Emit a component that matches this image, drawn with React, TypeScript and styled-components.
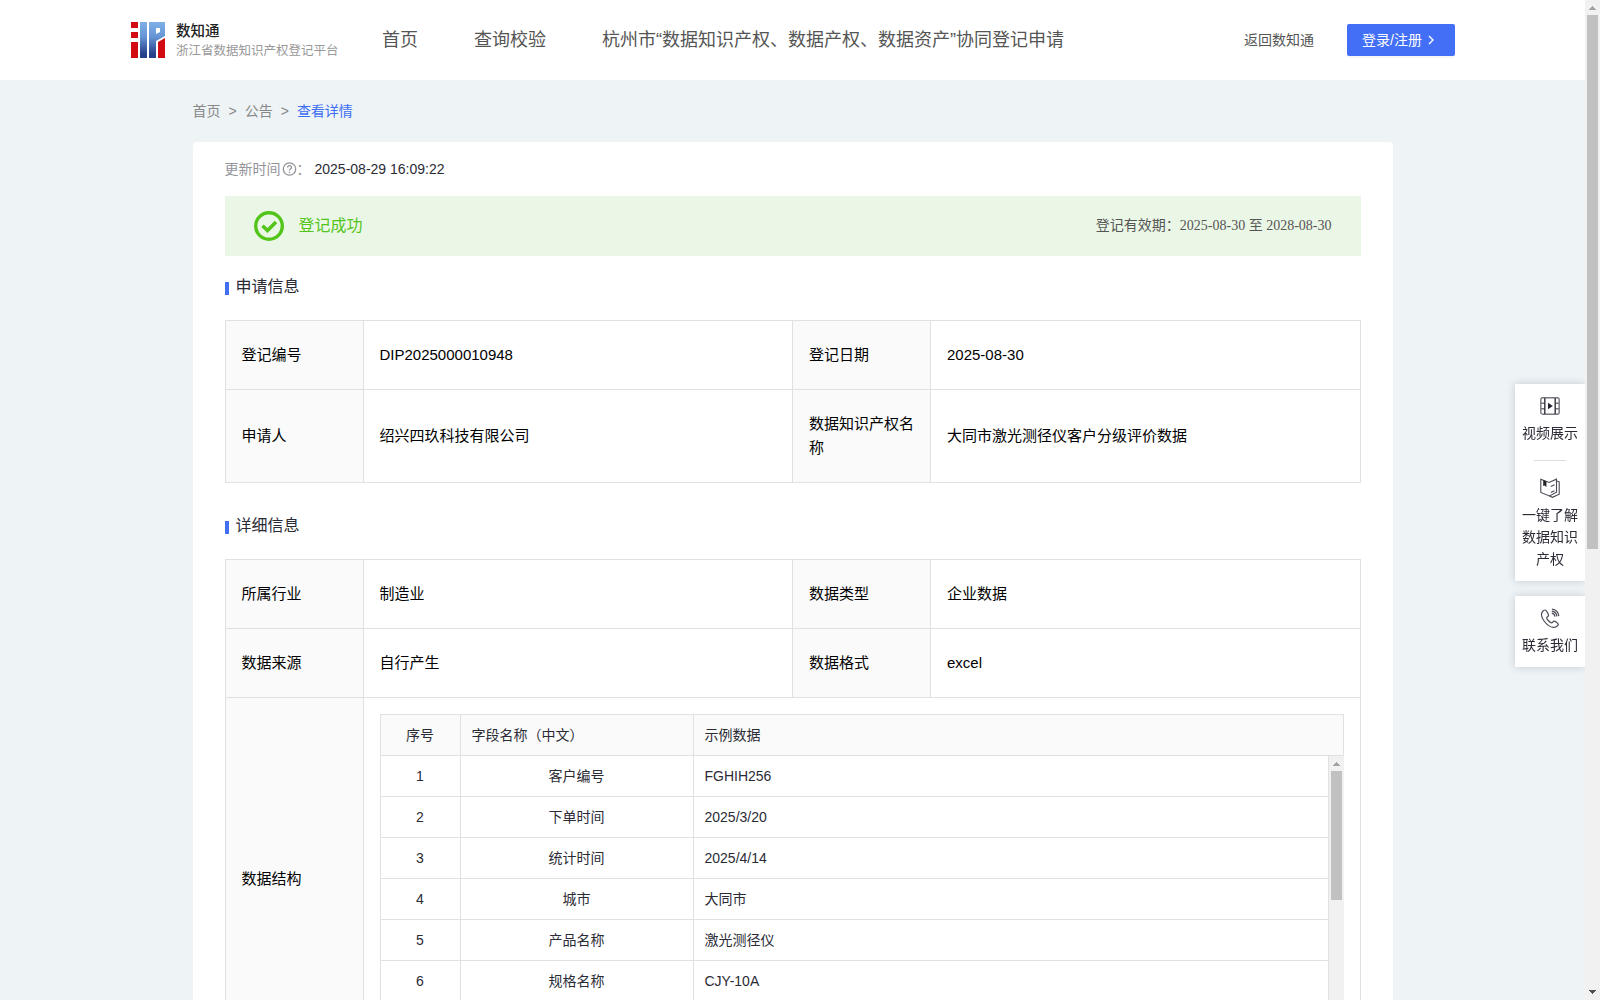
import React from "react";
import styled, { createGlobalStyle, css } from "styled-components";

const sans = `"Liberation Sans", "Noto Sans CJK SC", sans-serif`;
const line = "#e1e1e1";

const GlobalStyle = createGlobalStyle`
  *, *::before, *::after { box-sizing: border-box; }
  body {
    margin: 0;
    background: #eef3f6;
    color: #2b2b36;
    font: 14px/22px ${sans};
  }
  a { color: inherit; text-decoration: none; }
`;

/* ---------- shell and scroll bars ---------- */

const Shell = styled.div`
  display: grid;
  grid-template-columns: minmax(0, 1fr) 15px;
  height: 100vh;
`;

const Viewport = styled.div`
  overflow-y: auto;
  scrollbar-width: none;
`;

const Rail = styled.div`
  display: flex;
  flex-direction: column;
  align-items: center;
  width: 15px;
  background: #f1f1f1;
`;

const Track = styled.div`
  flex: 1;
  width: 11px;
`;

const Thumb = styled.div<{ $share: number }>`
  height: ${(p) => p.$share}%;
  background: #c1c1c1;
`;

const RailArrow = ({ down = false }: { down?: boolean }) => (
  <svg width="15" height="15" viewBox="0 0 15 15" shapeRendering="crispEdges" aria-hidden="true">
    {down ? (
      <path d="M4 5h7v1h-1v1H9v1H8v1H7V8H6V7H5V6H4z" fill="#505050" />
    ) : (
      <path d="M4 10h7V9h-1V8H9V7H8V6H7v1H6v1H5v1H4z" fill="#a3a3a3" />
    )}
  </svg>
);

const ScrollRail = ({ share }: { share: number }) => (
  <Rail aria-hidden="true">
    <RailArrow />
    <Track>
      <Thumb $share={share} />
    </Track>
    <RailArrow down />
  </Rail>
);

/* ---------- header ---------- */

const Header = styled.header`
  display: flex;
  align-items: center;
  height: 80px;
  padding: 0 130px 0 131px;
  background: #fff;
`;

const Nav = styled.nav`
  display: flex;
  flex: 1;
  gap: 56px;
  margin-left: 41px;
  color: #555;
  font-size: 18px;
  line-height: 28px;
  white-space: nowrap;
`;

const BackLink = styled.a`
  color: #555;
  white-space: nowrap;
`;

const LoginButton = styled.button`
  display: flex;
  align-items: center;
  gap: 3px;
  height: 32px;
  margin-left: 33px;
  padding: 0 18px 0 15px;
  border: 0;
  border-radius: 2px;
  background: #436ff6;
  box-shadow: 0 2px 0 rgba(0, 0, 0, 0.04);
  color: #fff;
  font: 14px/22px ${sans};
  white-space: nowrap;
  cursor: pointer;
`;

const LogoArt = styled.svg`
  flex: none;
  overflow: visible;
`;

const Logo = () => (
  <LogoArt width="210" height="36" viewBox="0 0 420 72" role="img" aria-label="数知通">
    <defs>
      <linearGradient id="pillar" gradientUnits="userSpaceOnUse" x1="0" y1="0" x2="0" y2="72">
        <stop offset="0" stopColor="#7fb0e6" />
        <stop offset="0.4" stopColor="#6796d6" />
        <stop offset="0.9" stopColor="#26408a" />
      </linearGradient>
    </defs>
    <g fill="#d20a11">
      <path d="M0 0h14v12H0zM0 20h14v12H0zM0 40h14v32H0z" />
      <path d="M54 40l14-8v40H54z" />
    </g>
    <g fill="url(#pillar)">
      <path d="M18 0h14v72H18z" />
      <path d="M36 0h32v28L50 38v34H36zM50 12v12l8-4v-8z" fillRule="evenodd" />
    </g>
    <text x="90" y="28" fontSize="29" fontWeight="500" fill="#222" fontFamily="Noto Sans CJK SC, sans-serif">数知通</text>
    <text x="90" y="65" fontSize="25" fill="#999" fontFamily="Noto Sans CJK SC, sans-serif">浙江省数据知识产权登记平台</text>
  </LogoArt>
);

/* ---------- page ---------- */

const Page = styled.main`
  max-width: 1200px;
  margin: 0 auto;
  padding-bottom: 32px;
`;

const Crumbs = styled.nav`
  display: flex;
  gap: 8px;
  padding: 20px 0;
  color: #888;
`;

const CurrentCrumb = styled.a`
  color: #3d6df5;
`;

const Card = styled.section`
  padding: 16px 32px 32px;
  border-radius: 4px;
  background: #fff;
`;

const Updated = styled.div`
  display: flex;
  align-items: center;
  color: #939399;
`;

const UpdatedTime = styled.time`
  margin-left: 4px;
  color: #2b2b36;
`;

const Banner = styled.div`
  display: flex;
  align-items: center;
  gap: 15px;
  height: 60px;
  margin: 16px 0 19px;
  padding: 0 29px;
  background: #ebf7e6;
`;

const BannerStatus = styled.strong`
  flex: 1;
  color: #52c41a;
  font-size: 16px;
  font-weight: 400;
`;

const Validity = styled.span`
  color: #555;
  font-family: "Liberation Serif", "Noto Sans CJK SC", serif;
`;

const SectionTitle = styled.h2`
  display: flex;
  align-items: center;
  gap: 7px;
  margin: 0 0 21px;
  font-size: 16px;
  font-weight: 400;
  line-height: 24px;

  &::before {
    content: "";
    width: 4px;
    height: 13px;
    margin-top: 3px;
    background: #436ff6;
  }
`;

const InfoTable = styled.table`
  width: 100%;
  margin-bottom: 31px;
  border-collapse: collapse;
  table-layout: fixed;
  color: #000;
  font-size: 15px;
  line-height: 24px;
`;

const InfoLabel = styled.th`
  padding: 22px 16px;
  border: 1px solid ${line};
  background: #fafafa;
  font-weight: 400;
  text-align: left;
`;

const InfoValue = styled.td<{ $flush?: boolean }>`
  padding: ${(p) => (p.$flush ? "16px" : "22px 16px")};
  border: 1px solid ${line};
`;

const LabelCol = styled.col`
  width: 138px;
`;

const FieldTable = styled.table`
  width: 100%;
  border-spacing: 0;
  table-layout: fixed;
  color: #2b2b36;
  font-size: 14px;
  line-height: 22px;
`;

const IndexCol = styled.col`
  width: 81px;
`;

const NameCol = styled.col`
  width: 233px;
`;

const fieldCell = css<{ $center?: boolean }>`
  height: 41px;
  padding: 0 11px;
  border: 0 solid ${line};
  border-width: 0 1px 1px 0;
  font-weight: 400;
  text-align: ${(p) => (p.$center ? "center" : "left")};

  &:first-child {
    border-left-width: 1px;
  }
`;

const FieldHead = styled.th<{ $center?: boolean }>`
  ${fieldCell}
  height: 42px;
  border-top-width: 1px;
  background: #fafafa;
`;

const FieldCell = styled.td<{ $center?: boolean }>`
  ${fieldCell}
`;

const FieldBody = styled.div`
  display: grid;
  grid-template-columns: minmax(0, 1fr) 15px;
  height: 287px;
`;

/* ---------- side tools ---------- */

const SideTools = styled.aside`
  position: fixed;
  top: 384px;
  right: 15px;
  display: grid;
  gap: 15px;
  width: 70px;
  clip-path: inset(-12px 0 -12px -12px);
`;

const ToolGroup = styled.div`
  display: flex;
  flex-direction: column;
  align-items: center;
  padding: 12px 7px 11px;
  background: #fff;
  box-shadow: 0 0 8px rgba(60, 60, 90, 0.22);
`;

const Tool = styled.a`
  display: flex;
  flex-direction: column;
  align-items: center;
  gap: 6px;
  text-align: center;
`;

const ToolDivider = styled.hr`
  width: 32px;
  margin: 16px 0 17px;
  border: 0;
  border-top: 1px solid #ddd;
`;

/* ---------- icons ---------- */

const ChevronIcon = () => (
  <svg width="12" height="12" viewBox="0 0 12 12" fill="none" stroke="#fff" strokeWidth="1.4" aria-hidden="true">
    <path d="M4 2l4 4-4 4" />
  </svg>
);

const HelpIcon = () => (
  <svg width="16" height="16" viewBox="0 0 16 16" fill="none" stroke="#939399" strokeWidth="1.3" aria-hidden="true">
    <circle cx="8.5" cy="8" r="6.2" />
    <path d="M6.600 6.600c0-2.600 3.900-2.500 3.900-.2 0 1.400-2 1.400-2 3" />
    <path d="M8.500 10.600v1.300" />
  </svg>
);

const SuccessIcon = () => (
  <svg width="30" height="30" viewBox="0 0 30 30" fill="none" stroke="#52c41a" aria-hidden="true">
    <circle cx="15" cy="15" r="13.3" strokeWidth="3.4" />
    <path d="M8.5 14.800l5 4.700 8.500-8.500" strokeWidth="3.6" />
  </svg>
);

const VideoIcon = () => (
  <svg width="20" height="20" viewBox="0 0 20 20" fill="none" stroke="#77777f" strokeWidth="1.4" aria-hidden="true">
    <rect x="0.8" y="1.8" width="18.4" height="16.4" rx="2" />
    <path d="M1 7.300h3.800M1 12.700h3.800M15.200 7.300H19M15.200 12.700H19" />
    <path d="M4.800 2v16M15.200 2v16" stroke="#33333d" />
    <path d="M8 6.800l4.800 3.200L8 13.200z" fill="#22222c" stroke="none" />
  </svg>
);

const BookIcon = () => (
  <svg width="20" height="20" viewBox="0 0 20 20" fill="none" stroke="#4a4a55" strokeWidth="1.1" aria-hidden="true">
    <path d="M.8 1.200l8.200 3.300 7.500-3.300v13L9.500 18 .8 14.500z" />
    <path d="M16.500 3l2.700.8v12.400L12.500 19.300l-3-1.300" />
    <path d="M10.800 8.500l3.700-1.800M10.800 14.500l3.700-1.800" />
    <path d="M3.200 2l3.200 1.300v6L4.800 7.600 3.200 8z" fill="#222" stroke="none" />
  </svg>
);

const PhoneIcon = () => (
  <svg width="20" height="20" viewBox="0 0 20 20" fill="none" stroke="#4a4a55" strokeWidth="1.2" aria-hidden="true">
    <path d="M5.600 2.200c-1-.6-2 .1-3 1.300-4 4.600 4.400 15.500 10.800 15.900 2 .1 4.800-1.600 4.900-3 .1-1.200-3.500-3.600-4.500-3.300-1 .3-1.300 1.900-2.300 1.700-1.700-.4-4.800-3.400-4.800-4.900 0-1.100 1.600-1.100 1.800-2.300.2-1-1.700-4.700-2.900-5.400z" />
    <path d="M11.800 5.200c1.800.3 2.900 1.500 3.200 3.400M11.800 3.200c2.900.3 4.700 2.200 5.100 5.200M11.900 1.200c4 .4 6.400 2.900 6.900 6.900" />
  </svg>
);

/* ---------- data ---------- */

type Pair = [string, string];

const application: Pair[][] = [
  [["登记编号", "DIP2025000010948"], ["登记日期", "2025-08-30"]],
  [["申请人", "绍兴四玖科技有限公司"], ["数据知识产权名称", "大同市激光测径仪客户分级评价数据"]],
];

const details: Pair[][] = [
  [["所属行业", "制造业"], ["数据类型", "企业数据"]],
  [["数据来源", "自行产生"], ["数据格式", "excel"]],
];

const fields: Pair[] = [
  ["客户编号", "FGHIH256"],
  ["下单时间", "2025/3/20"],
  ["统计时间", "2025/4/14"],
  ["城市", "大同市"],
  ["产品名称", "激光测径仪"],
  ["规格名称", "CJY-10A"],
];

const InfoCols = () => (
  <colgroup>
    <LabelCol />
    <col />
    <LabelCol />
    <col />
  </colgroup>
);

const InfoRows = ({ rows }: { rows: Pair[][] }) => (
  <>
    {rows.map((row) => (
      <tr key={row[0][0]}>
        {row.map(([label, value]) => (
          <React.Fragment key={label}>
            <InfoLabel scope="row">{label}</InfoLabel>
            <InfoValue>{value}</InfoValue>
          </React.Fragment>
        ))}
      </tr>
    ))}
  </>
);

const FieldCols = () => (
  <colgroup>
    <IndexCol />
    <NameCol />
    <col />
  </colgroup>
);

export default function App() {
  return (
    <Shell>
      <GlobalStyle />
      <Viewport>
        <Header>
          <Logo />
          <Nav>
            <a href="#home">首页</a>
            <a href="#verify">查询校验</a>
            <a href="#joint">杭州市“数据知识产权、数据产权、数据资产”协同登记申请</a>
          </Nav>
          <BackLink href="#back">返回数知通</BackLink>
          <LoginButton type="button">
            登录/注册
            <ChevronIcon />
          </LoginButton>
        </Header>

        <Page>
          <Crumbs>
            <a href="#home">首页</a>
            <span>&gt;</span>
            <a href="#notice">公告</a>
            <span>&gt;</span>
            <CurrentCrumb href="#detail">查看详情</CurrentCrumb>
          </Crumbs>

          <Card>
            <Updated>
              更新时间
              <HelpIcon />
              ：<UpdatedTime>2025-08-29 16:09:22</UpdatedTime>
            </Updated>

            <Banner>
              <SuccessIcon />
              <BannerStatus>登记成功</BannerStatus>
              <Validity>登记有效期：2025-08-30 至 2028-08-30</Validity>
            </Banner>

            <SectionTitle>申请信息</SectionTitle>
            <InfoTable>
              <InfoCols />
              <tbody>
                <InfoRows rows={application} />
              </tbody>
            </InfoTable>

            <SectionTitle>详细信息</SectionTitle>
            <InfoTable>
              <InfoCols />
              <tbody>
                <InfoRows rows={details} />
                <tr>
                  <InfoLabel scope="row">数据结构</InfoLabel>
                  <InfoValue colSpan={3} $flush>
                    <FieldTable>
                      <FieldCols />
                      <thead>
                        <tr>
                          <FieldHead $center>序号</FieldHead>
                          <FieldHead>字段名称（中文）</FieldHead>
                          <FieldHead>示例数据</FieldHead>
                        </tr>
                      </thead>
                    </FieldTable>
                    <FieldBody>
                      <Viewport>
                        <FieldTable>
                          <FieldCols />
                          <tbody>
                            {fields.map(([name, sample], i) => (
                              <tr key={name}>
                                <FieldCell $center>{i + 1}</FieldCell>
                                <FieldCell $center>{name}</FieldCell>
                                <FieldCell>{sample}</FieldCell>
                              </tr>
                            ))}
                          </tbody>
                        </FieldTable>
                      </Viewport>
                      <ScrollRail share={50} />
                    </FieldBody>
                  </InfoValue>
                </tr>
              </tbody>
            </InfoTable>
          </Card>
        </Page>
      </Viewport>
      <ScrollRail share={55} />

      <SideTools>
        <ToolGroup>
          <Tool href="#video">
            <VideoIcon />
            视频展示
          </Tool>
          <ToolDivider />
          <Tool href="#guide">
            <BookIcon />
            一键了解数据知识产权
          </Tool>
        </ToolGroup>
        <ToolGroup>
          <Tool href="#contact">
            <PhoneIcon />
            联系我们
          </Tool>
        </ToolGroup>
      </SideTools>
    </Shell>
  );
}
